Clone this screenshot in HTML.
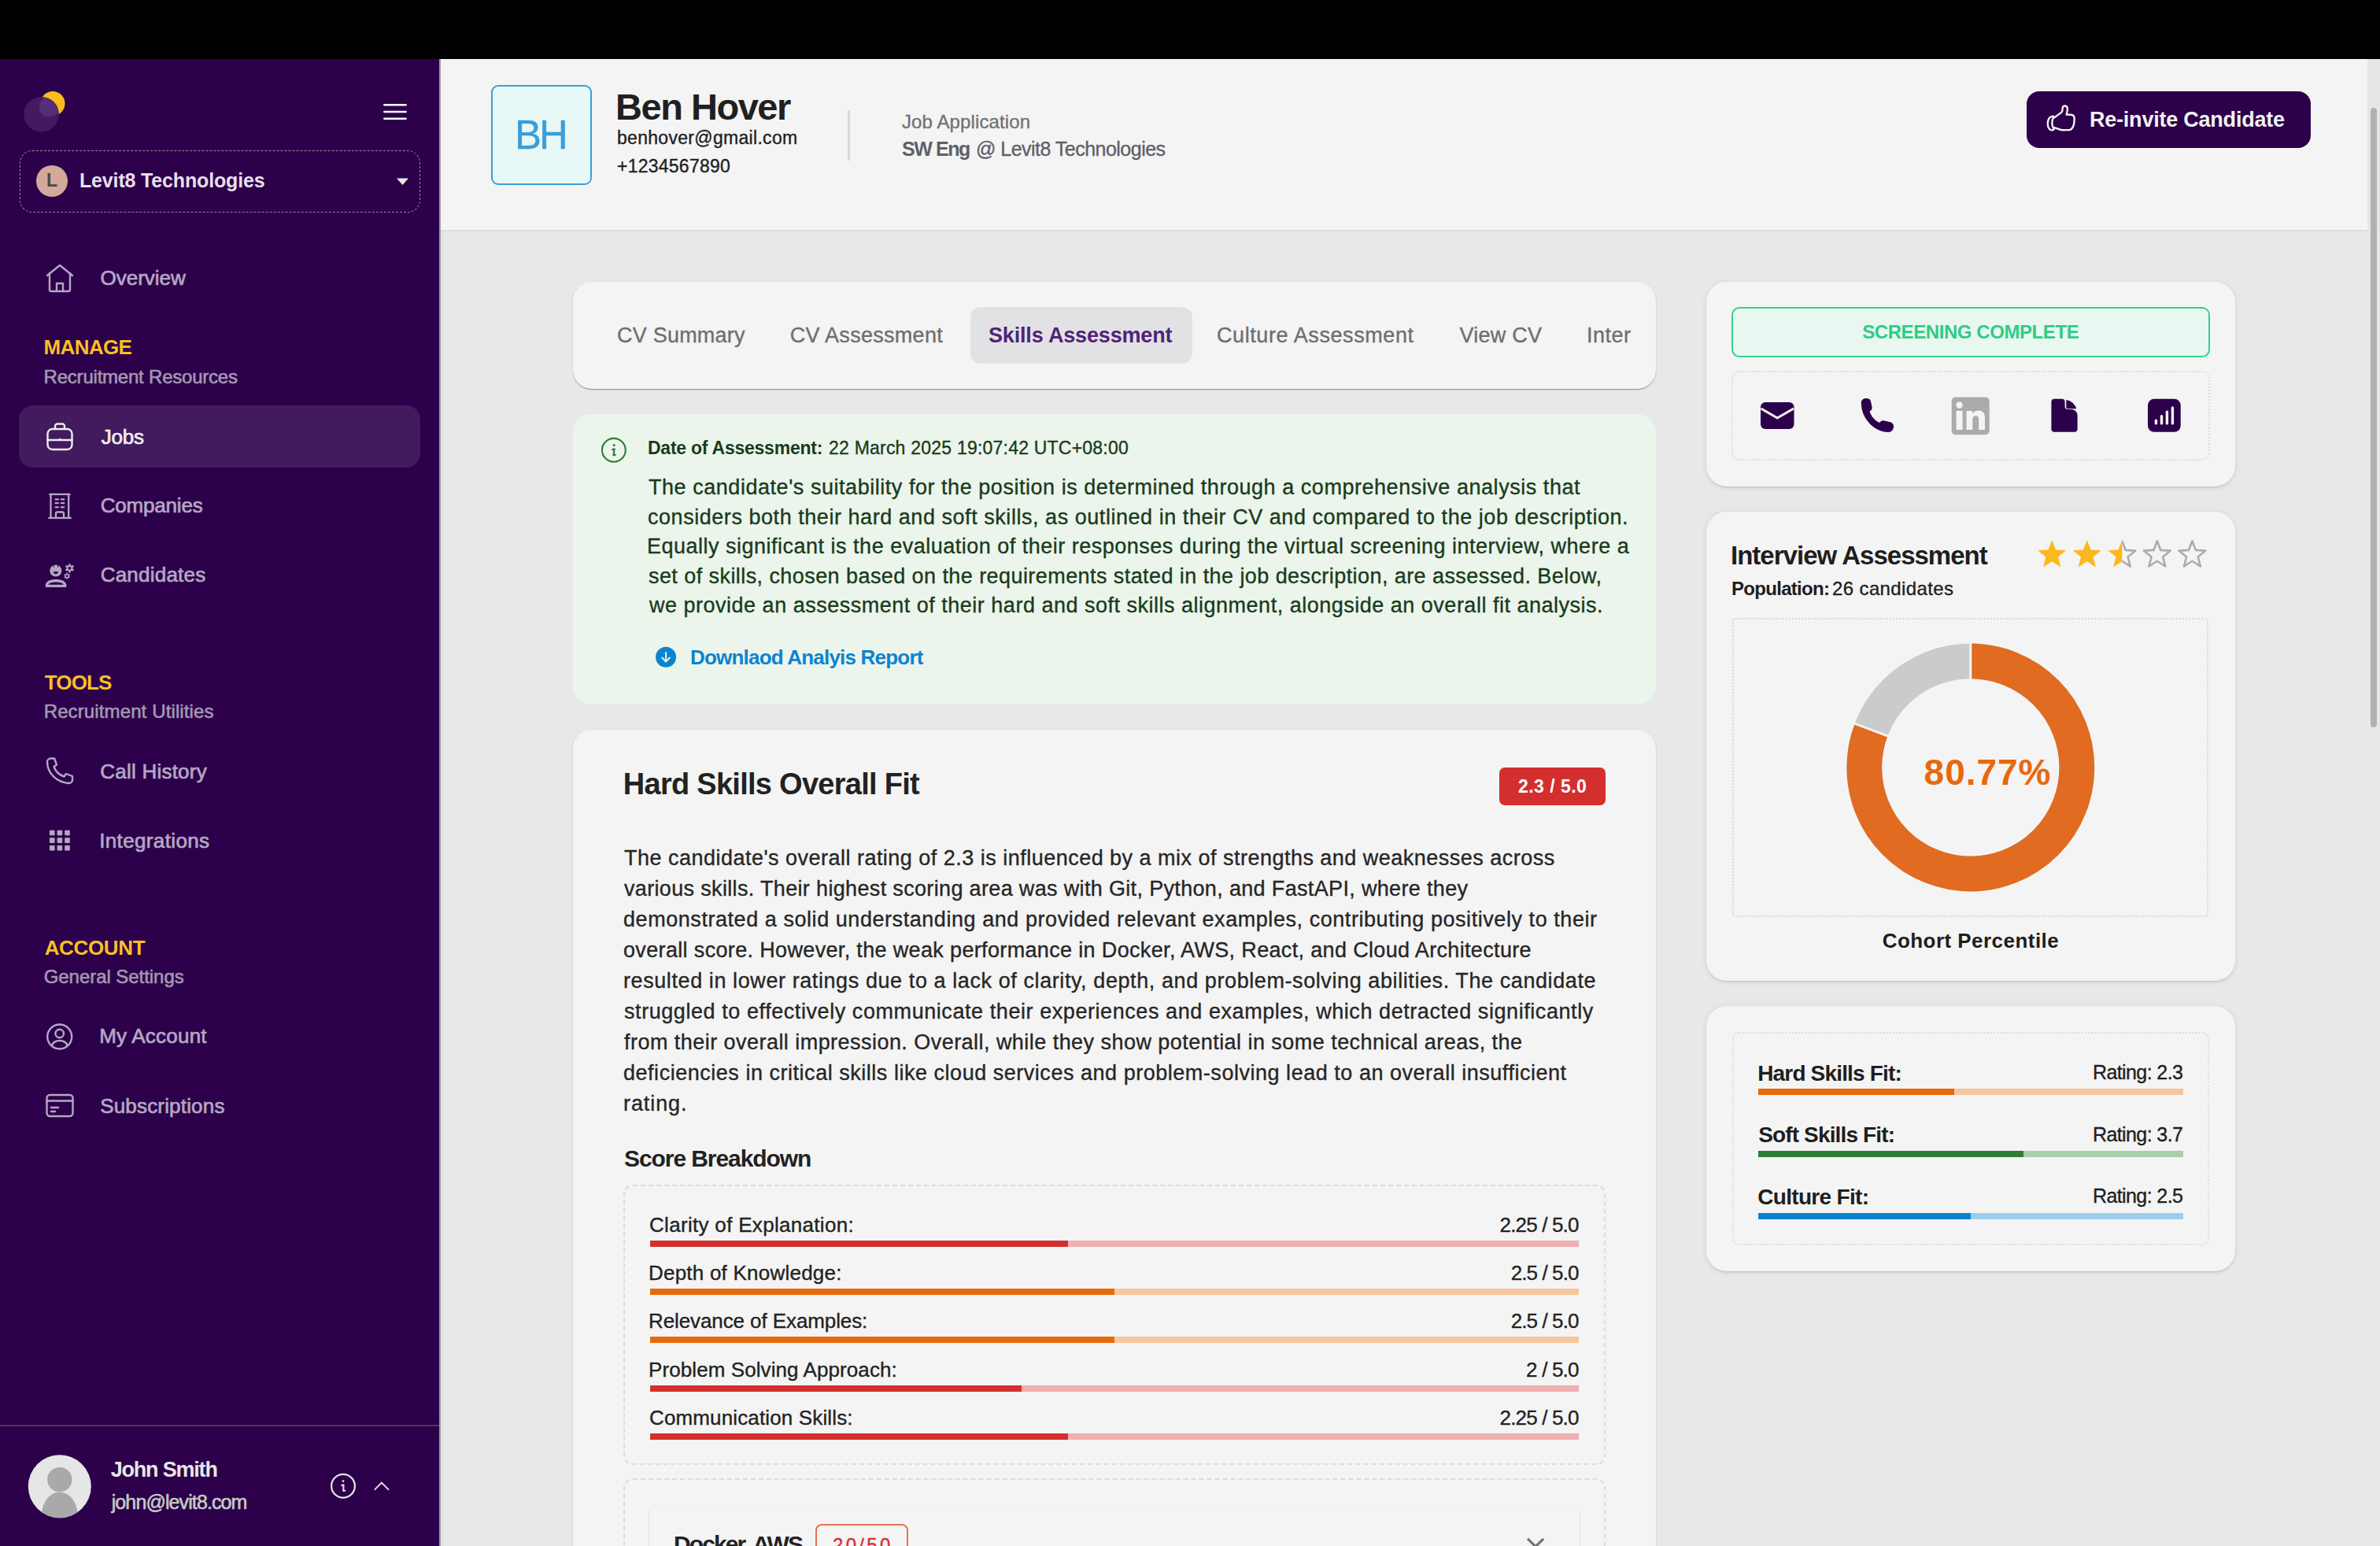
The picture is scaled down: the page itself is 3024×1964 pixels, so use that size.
<!DOCTYPE html>
<html><head><meta charset="utf-8"><style>
*{margin:0;padding:0;box-sizing:border-box}
html,body{width:3024px;height:1964px;overflow:hidden;background:#e8e8e8;font-family:"Liberation Sans",sans-serif}
.a{position:absolute}
.t{position:absolute;white-space:pre}
svg{position:absolute;overflow:visible}
</style></head><body>
<div class="a" style="left:0;top:0;width:3024px;height:75px;background:#000"></div>
<div class="a" style="left:0;top:75px;width:558px;height:1889px;background:#2c004a"></div>
<div class="a" style="left:558px;top:75px;width:2px;height:1889px;background:#9c9c9c"></div>
<svg style="left:0;top:0" width="120" height="200"><defs><clipPath id="bc"><circle cx="52.6" cy="145.3" r="22.3"/></clipPath></defs>
      <circle cx="67" cy="131.5" r="15.5" fill="#fbbc1c"/>
      <circle cx="52.6" cy="145.3" r="22.3" fill="#431a60"/>
      <circle cx="62.5" cy="135.8" r="12.8" fill="#572d79" clip-path="url(#bc)"/></svg>
<svg style="left:480px;top:125px" width="45" height="35"><g stroke="#ffffff" stroke-width="2.6" stroke-linecap="round">
      <line x1="8.4" y1="8.3" x2="35.6" y2="8.3"/><line x1="8.4" y1="17" x2="35.6" y2="17"/><line x1="8.4" y1="25.7" x2="35.6" y2="25.7"/></g></svg>
<div class="a" style="left:24.5px;top:190.8px;width:509px;height:79px;border:1.4px dashed #948aa0;border-radius:16px"></div>
<div class="a" style="left:46px;top:210px;width:40px;height:40px;border-radius:50%;background:#d4a89b"></div>
<svg style="left:500px;top:222px" width="24" height="16"><path d="M4 4.5 L19 4.5 L11.5 13 Z" fill="#e8e8e8"/></svg>
<svg style="left:56px;top:334px" width="40" height="40"><g stroke="#b4a7c4" stroke-width="2.4" fill="none" stroke-linecap="round" stroke-linejoin="round">
      <path d="M4 16 L20 3 L36 16"/><path d="M7 13 V34 a2 2 0 0 0 2 2 H31 a2 2 0 0 0 2 -2 V13"/><path d="M16 36 V26 H24 V36"/></g></svg>
<div class="a" style="left:24px;top:515px;width:509.5px;height:79px;border-radius:18px;background:#421a5e"></div>
<svg style="left:56px;top:535px" width="40" height="40"><g stroke="#ececec" stroke-width="2.4" fill="none" stroke-linecap="round" stroke-linejoin="round">
      <rect x="4.5" y="10" width="31" height="26" rx="6"/><path d="M14 10 V6.5 a3 3 0 0 1 3 -3 H23 a3 3 0 0 1 3 3 V10"/><path d="M4.5 24 H35.5"/></g><circle cx="20" cy="23" r="1.3" fill="#ececec"/></svg>
<svg style="left:50px;top:615px" width="55" height="50"><g stroke="#b4a7c4" stroke-width="2.3" fill="none" stroke-linecap="butt">
      <path d="M12.3 12.9 H39.4"/><path d="M11.3 43 H40.7"/><path d="M14.5 12.9 V43 M37.2 12.9 V43"/><path d="M21 43 V37.5 a2 2 0 0 1 2 -2 H29 a2 2 0 0 1 2 2 V43"/></g>
      <g stroke="#b4a7c4" stroke-width="2.3" stroke-linecap="round"><path d="M20.6 19.4 H23.9 M27.8 19.4 H31.2 M20.6 24.2 H23.9 M27.8 24.2 H31.2 M20.6 29.3 H23.9 M27.8 29.3 H31.2"/></g></svg>
<svg style="left:50px;top:705px" width="55" height="50"><g fill="#b4a7c4">
      <circle cx="20.85" cy="20" r="7.6"/>
      <path d="M7.8 40.9 V38.2 C7.8 33.6 14 31 21 31 C28 31 34.3 33.6 34.3 38.2 V40.9 Z"/>
      <polygon points="37.22,13.07 37.23,11.14 39.77,11.14 39.78,13.07 41.09,13.83 42.77,12.87 44.03,15.07 42.37,16.04 42.37,17.56 44.03,18.53 42.77,20.73 41.09,19.77 39.78,20.53 39.77,22.46 37.23,22.46 37.22,20.53 35.91,19.77 34.23,20.73 32.97,18.53 34.63,17.56 34.63,16.04 32.97,15.07 34.23,12.87 35.91,13.83"/><polygon points="34.20,24.16 34.21,22.80 35.99,22.80 36.00,24.16 36.93,24.70 38.12,24.02 39.01,25.57 37.84,26.26 37.84,27.34 39.01,28.03 38.12,29.58 36.93,28.90 36.00,29.44 35.99,30.80 34.21,30.80 34.20,29.44 33.27,28.90 32.08,29.58 31.19,28.03 32.36,27.34 32.36,26.26 31.19,25.57 32.08,24.02 33.27,24.70"/></g>
      <g fill="#2c004a"><path d="M17.9 21.2 H23.9 A3 3 0 0 1 17.9 21.2 Z"/><rect x="17.6" y="12" width="1" height="3.6"/><rect x="23.1" y="12" width="1" height="3.6"/>
      <path d="M11.2 37.8 C12.5 35.6 16 34.6 21 34.6 C26 34.6 29.5 35.6 30.9 37.8 Z"/>
      <circle cx="38.5" cy="16.8" r="1.9"/><circle cx="35.1" cy="26.8" r="1.4"/></g></svg>
<svg style="left:56px;top:960px" width="40" height="40"><g stroke="#b4a7c4" stroke-width="2.4" fill="none" stroke-linecap="round" stroke-linejoin="round">
      <path d="M8.5 3.5 L13 3.5 L16 11.5 L12.5 14 C14.5 19.5 19.5 24.5 25.5 26.5 L28 23 L36 26 V30.5 a4.5 4.5 0 0 1 -4.5 4.5 C16 34 4 22 4 8 a4.5 4.5 0 0 1 4.5 -4.5 Z"/></g></svg>
<svg style="left:0;top:0" width="100" height="1100"><g fill="#b4a7c4"><rect x="63.0" y="1054.7" width="6.6" height="6.6" rx="0.8"/><rect x="72.6" y="1054.7" width="6.6" height="6.6" rx="0.8"/><rect x="82.2" y="1054.7" width="6.6" height="6.6" rx="0.8"/><rect x="63.0" y="1064.3" width="6.6" height="6.6" rx="0.8"/><rect x="72.6" y="1064.3" width="6.6" height="6.6" rx="0.8"/><rect x="82.2" y="1064.3" width="6.6" height="6.6" rx="0.8"/><rect x="63.0" y="1073.9" width="6.6" height="6.6" rx="0.8"/><rect x="72.6" y="1073.9" width="6.6" height="6.6" rx="0.8"/><rect x="82.2" y="1073.9" width="6.6" height="6.6" rx="0.8"/></g></svg>
<svg style="left:56px;top:1297px" width="40" height="40"><g stroke="#b4a7c4" stroke-width="2.4" fill="none" stroke-linecap="round" stroke-linejoin="round">
      <circle cx="19.7" cy="20" r="15.5"/><circle cx="19.7" cy="16" r="5.3"/><path d="M9.5 31.5 C11.5 27 15 25 19.7 25 C24.4 25 28 27 30 31.5"/></g></svg>
<svg style="left:56px;top:1385px" width="40" height="40"><g stroke="#b4a7c4" stroke-width="2.4" fill="none" stroke-linecap="round" stroke-linejoin="round">
      <rect x="3.5" y="6" width="33" height="27" rx="4"/><path d="M3.5 13.5 H36.5"/><path d="M9 22 H18"/><path d="M9 27 H14"/></g></svg>
<div class="a" style="left:0;top:1810px;width:558px;height:2px;background:#4a3d55"></div>
<svg style="left:35px;top:1848px" width="82" height="82"><defs><clipPath id="av"><circle cx="40.8" cy="40.3" r="40"/></clipPath></defs>
      <circle cx="40.8" cy="40.3" r="40" fill="#e6e6e6"/><g clip-path="url(#av)" fill="#a9a9a9"><circle cx="40.8" cy="31.6" r="15.7"/><ellipse cx="40.8" cy="78.5" rx="23.2" ry="31"/></g></svg>
<svg style="left:415px;top:1867px" width="42" height="42"><circle cx="21" cy="20.8" r="14.9" stroke="#e4e4e4" stroke-width="2.2" fill="none"/>
      <circle cx="21" cy="14.6" r="1.4" fill="#e4e4e4"/><path d="M19.2 20.2 Q20.4 19.2 21.6 19.4 L21.2 26.8 Q22.3 27.2 23.2 26.6" stroke="#e4e4e4" stroke-width="2" fill="none" stroke-linecap="round" stroke-linejoin="round"/></svg>
<svg style="left:470px;top:1875px" width="30" height="24"><path d="M6.3 17.2 L14.9 8.6 L23.4 17.2" stroke="#e4e4e4" stroke-width="1.9" fill="none" stroke-linecap="round" stroke-linejoin="miter"/></svg>
<div class="a" style="left:560px;top:75px;width:2448px;height:217px;background:#f4f4f4;border-top:1px solid #ffffff"></div>
<div class="a" style="left:560px;top:292px;width:2448px;height:2px;background:#dcdcdc"></div>
<div class="a" style="left:3008px;top:75px;width:16px;height:219px;background:#e6e6e6"></div>
<div class="a" style="left:3012px;top:137px;width:8px;height:787px;border-radius:4px;background:#b1b1b1"></div>
<div class="a" style="left:624px;top:108px;width:128px;height:127px;border:2.5px solid #3c9fd9;border-radius:9px;background:#e8f8f6"></div>
<div class="a" style="left:1077px;top:140px;width:3px;height:64px;background:#dadada"></div>
<div class="a" style="left:2575px;top:116px;width:361px;height:72px;border-radius:16px;background:#2c004a"></div>
<svg style="left:2598px;top:130px" width="44" height="42"><g stroke="#f2f2f2" stroke-width="2.4" fill="none" stroke-linejoin="round" stroke-linecap="round">
      <path d="M10.8 17.6 C6 17.8 3.8 22 3.8 27 C3.8 32 6 35.4 9.5 35.4 C10.6 35.4 11.5 35 11.8 34.2 C10.2 31.5 9.3 29 9.3 26.8 C9.3 24 10 20.5 11.4 18.3 Z"/>
      <path d="M12.2 19.4 L21.4 12.6 C22.4 11.6 22.7 10 22.6 8 C22.5 5.6 24 4.4 25.8 4.5 C28 4.7 29 6.6 28.9 9 C28.8 11 28.2 13.5 27.6 15.6 L33.4 15.8 C36 16 37.7 18 37.7 21 C37.7 24.5 37.3 27.5 36.4 30 C35.4 32.5 33.8 34.8 31.2 35.1 L23 35.3 C19 35.3 15.5 33 12.2 32.2"/></g></svg>
<div class="a" style="left:560px;top:294px;width:5px;height:1670px;background:linear-gradient(to right,#e3e3e3,#dfe0e1 60%,#e8e8e8)"></div>
<div class="a" style="left:728px;top:358px;width:1376px;height:136px;border-radius:24px;background:#f4f4f4;box-shadow:0 2px 1px -1px rgba(0,0,0,0.2),0 1px 1px 0 rgba(0,0,0,0.14),0 1px 3px 0 rgba(0,0,0,0.12)"></div>
<div class="a" style="left:1233px;top:390px;width:282px;height:72px;border-radius:13px;background:#e2e2e4"></div>
<div class="a" style="left:728px;top:526px;width:1376px;height:369px;border-radius:24px;background:#ecf5ec"></div>
<svg style="left:760px;top:552px" width="40" height="40"><circle cx="19.9" cy="19.8" r="14.9" stroke="#2e7d32" stroke-width="2.1" fill="none"/>
      <circle cx="20.1" cy="13.5" r="1.5" fill="#2e7d32"/><path d="M18.2 19.3 Q19.4 18.2 20.7 18.4 L19.5 26.2 Q20.6 26.6 21.8 25.6" stroke="#2e7d32" stroke-width="2.1" fill="none" stroke-linecap="round" stroke-linejoin="round"/></svg>
<svg style="left:830px;top:819px" width="32" height="32"><circle cx="16.1" cy="15.8" r="13" fill="#0a84d0"/>
      <path d="M16.1 10 V21.6 M11.3 16.5 L16.1 21.6 L20.9 16.5" stroke="#ecf5ec" stroke-width="2" fill="none" stroke-linecap="round" stroke-linejoin="round"/></svg>
<div class="a" style="left:728px;top:927px;width:1376px;height:1100px;border-radius:24px;background:#f4f4f4;box-shadow:0 2px 1px -1px rgba(0,0,0,0.2),0 1px 1px 0 rgba(0,0,0,0.14),0 1px 3px 0 rgba(0,0,0,0.12)"></div>
<div class="a" style="left:1905px;top:975px;width:135px;height:48px;border-radius:7px;background:#d32f2f"></div>
<div class="a" style="left:792px;top:1505px;width:1248px;height:356px;border:2px dashed #dcdcdc;border-radius:12px"></div>
<div class="a" style="left:826px;top:1576.0px;width:1180px;height:8px;background:#eeb0b0"></div>
<div class="a" style="left:826px;top:1576.0px;width:531.0px;height:8px;background:#d32f2f"></div>
<div class="a" style="left:826px;top:1637.2px;width:1180px;height:8px;background:#f6c79e"></div>
<div class="a" style="left:826px;top:1637.2px;width:590.0px;height:8px;background:#e8690b"></div>
<div class="a" style="left:826px;top:1698.4px;width:1180px;height:8px;background:#f6c79e"></div>
<div class="a" style="left:826px;top:1698.4px;width:590.0px;height:8px;background:#e8690b"></div>
<div class="a" style="left:826px;top:1759.6px;width:1180px;height:8px;background:#eeb0b0"></div>
<div class="a" style="left:826px;top:1759.6px;width:472.0px;height:8px;background:#d32f2f"></div>
<div class="a" style="left:826px;top:1820.8px;width:1180px;height:8px;background:#eeb0b0"></div>
<div class="a" style="left:826px;top:1820.8px;width:531.0px;height:8px;background:#d32f2f"></div>
<div class="a" style="left:792px;top:1878px;width:1248px;height:200px;border:2px dashed #dcdcdc;border-radius:12px"></div>
<div class="a" style="left:825px;top:1911.5px;width:1182px;height:150px;border-radius:10px;background:#f4f4f4;box-shadow:0 2px 1px -1px rgba(0,0,0,0.2),0 1px 1px 0 rgba(0,0,0,0.14),0 1px 3px 0 rgba(0,0,0,0.12)"></div>
<div class="a" style="left:1036px;top:1936px;width:118px;height:60px;border:2px solid #e57357;border-radius:8px"></div>
<svg style="left:1935px;top:1950px" width="32" height="20"><path d="M6 4.8 L16.1 14.6 L26.2 4.8" stroke="#727272" stroke-width="3.2" fill="none"/></svg>
<div class="a" style="left:2168px;top:358px;width:672px;height:260px;border-radius:26px;background:#f4f4f4;box-shadow:0 2px 2px -1px rgba(0,0,0,0.14),0 1px 6px 1px rgba(0,0,0,0.08)"></div>
<div class="a" style="left:2200px;top:390px;width:608px;height:64px;border:2.5px solid #34d08a;border-radius:10px;background:#e8f8f1"></div>
<div class="a" style="left:2200px;top:471px;width:608px;height:114px;border:2px dotted #dddddd;border-radius:10px"></div>
<svg style="left:2230px;top:500px" width="60" height="52"><rect x="7" y="11" width="42.5" height="34" rx="6" fill="#2c004a"/>
      <path d="M7.5 19 L28.2 31 L49 19" stroke="#f4f4f4" stroke-width="3" fill="none" stroke-linejoin="round"/></svg>
<svg style="left:2360px;top:503px" width="50" height="50"><path d="M4.8 9 C4.8 5 7.5 3 11 3 C14.5 3 16.5 4.5 17 7 L18.5 14 C19 16.5 18 18 15.5 19.5 C17.5 26 22 31 28 34 C30 32 31.5 31 34 31.5 L41 33 C44.5 34 46.5 36 46 39.5 C45.5 43.5 43 46 39 46 C22 46 4.8 29 4.8 9 Z" fill="#2c004a"/></svg>
<svg style="left:2479px;top:504px" width="50" height="50"><rect x="0.7" y="0.5" width="48" height="47.7" rx="5" fill="#ababab"/>
      <circle cx="10.6" cy="10.5" r="4.2" fill="#f4f4f4"/><rect x="6.6" y="18" width="8" height="24" fill="#f4f4f4"/>
      <path d="M19.5 18 H27 V21.5 C28.5 19.2 31 17.5 35 17.5 C40.5 17.5 43 21 43 27 V42 H35.2 V29 C35.2 26 34 24.2 31.3 24.2 C28.8 24.2 27.3 26 27.3 29 V42 H19.5 Z" fill="#f4f4f4"/></svg>
<svg style="left:2600px;top:503px" width="46" height="50"><path d="M10.4 3.8 H19.8 a3.8 3.8 0 0 1 3.8 3.8 V13.2 a3.8 3.8 0 0 0 3.8 3.8 H31.6 a8 8 0 0 1 8 8 V41.8 a4 4 0 0 1 -4 4 H10.4 a4 4 0 0 1 -4 -4 V7.8 a4 4 0 0 1 4 -4 Z" fill="#2c004a"/>
      <path d="M25.3 5 V14.6 a1.6 1.6 0 0 0 1.6 1.6 H38.3 C36.5 10.5 31.5 6 25.3 5 Z" fill="#2c004a"/></svg>
<svg style="left:2726px;top:503px" width="50" height="50"><rect x="3" y="3.8" width="41.7" height="42" rx="8" fill="#2c004a"/>
      <g stroke="#f4f4f4" stroke-width="3.4" stroke-linecap="round"><path d="M13.4 31.1 V34.9 M20.5 25.7 V34.9 M27.4 20.2 V34.9 M34.4 14.9 V34.9"/></g></svg>
<div class="a" style="left:2168px;top:650px;width:672px;height:596px;border-radius:26px;background:#f4f4f4;box-shadow:0 2px 2px -1px rgba(0,0,0,0.14),0 1px 6px 1px rgba(0,0,0,0.08)"></div>
<svg style="left:0;top:0" width="2900" height="760"><defs><clipPath id="half"><rect x="2580" y="600" width="115" height="200"/></clipPath></defs><polygon points="2607.20,686.10 2612.00,698.49 2625.27,699.23 2614.97,707.62 2618.37,720.47 2607.20,713.27 2596.03,720.47 2599.43,707.62 2589.13,699.23 2602.40,698.49" fill="#fbb81f"/><polygon points="2651.75,686.10 2656.55,698.49 2669.82,699.23 2659.52,707.62 2662.92,720.47 2651.75,713.27 2640.58,720.47 2643.98,707.62 2633.68,699.23 2646.95,698.49" fill="#fbb81f"/><clipPath id="h3r"><rect x="2696.2999999999997" y="680" width="25" height="50"/></clipPath><polygon points="2696.30,687.30 2700.80,698.91 2713.23,699.60 2703.58,707.47 2706.76,719.50 2696.30,712.75 2685.84,719.50 2689.02,707.47 2679.37,699.60 2691.80,698.91" fill="none" stroke="#ababab" stroke-width="2.6" stroke-linejoin="round" clip-path="url(#h3r)"/><clipPath id="h3"><rect x="2671.2999999999997" y="680" width="25" height="50"/></clipPath><polygon points="2696.30,686.10 2701.10,698.49 2714.37,699.23 2704.07,707.62 2707.47,720.47 2696.30,713.27 2685.13,720.47 2688.53,707.62 2678.23,699.23 2691.50,698.49" fill="#fbb81f" clip-path="url(#h3)"/><polygon points="2740.85,687.30 2745.35,698.91 2757.78,699.60 2748.13,707.47 2751.31,719.50 2740.85,712.75 2730.39,719.50 2733.57,707.47 2723.92,699.60 2736.35,698.91" fill="none" stroke="#ababab" stroke-width="2.6" stroke-linejoin="round"/><polygon points="2785.40,687.30 2789.90,698.91 2802.33,699.60 2792.68,707.47 2795.86,719.50 2785.40,712.75 2774.94,719.50 2778.12,707.47 2768.47,699.60 2780.90,698.91" fill="none" stroke="#ababab" stroke-width="2.6" stroke-linejoin="round"/></svg>
<div class="a" style="left:2201px;top:785px;width:605px;height:380px;border:2.5px dotted #d8d8d8;border-radius:4px"></div>
<svg style="left:0;top:0" width="2700" height="1200"><g transform="rotate(-90 2503.8 975)">
      <circle cx="2503.8" cy="975" r="135.05" fill="none" stroke="#cbcbcb" stroke-width="44.7"/>
      <circle cx="2503.8" cy="975" r="135.05" fill="none" stroke="#e06b21" stroke-width="44.7" stroke-dasharray="685.37 848.54"/></g>
      <line x1="2503.8" y1="816.6" x2="2503.8" y2="863.3000000000001" stroke="#f4f4f4" stroke-width="3"/>
      <line x1="2399.36" y1="935.39" x2="2355.70" y2="918.82" stroke="#f4f4f4" stroke-width="3"/></svg>
<div class="a" style="left:2168px;top:1278px;width:672px;height:337px;border-radius:26px;background:#f4f4f4;box-shadow:0 2px 2px -1px rgba(0,0,0,0.14),0 1px 6px 1px rgba(0,0,0,0.08)"></div>
<div class="a" style="left:2201px;top:1311px;width:606px;height:271px;border:2px dotted #dddddd;border-radius:8px"></div>
<div class="a" style="left:2234.2px;top:1383.4px;width:539.5px;height:8px;background:#f7c59e"></div>
<div class="a" style="left:2234.2px;top:1383.4px;width:248.5px;height:8px;background:#e8690b"></div>
<div class="a" style="left:2234.2px;top:1462.0px;width:539.5px;height:8px;background:#a9cfab"></div>
<div class="a" style="left:2234.2px;top:1462.0px;width:336.8px;height:8px;background:#2e7d32"></div>
<div class="a" style="left:2234.2px;top:1540.7px;width:539.5px;height:8px;background:#9ccdec"></div>
<div class="a" style="left:2234.2px;top:1540.7px;width:269.8px;height:8px;background:#0a84d0"></div>
<div class="t" style="left:58.9px;top:214.0px;font-size:23px;line-height:30px;font-weight:700;color:#4a4a4a;letter-spacing:0.000px;">L</div>
<div class="t" style="left:101.0px;top:212.9px;font-size:25px;line-height:32px;font-weight:700;color:#e8dfec;letter-spacing:-0.160px;">Levit8 Technologies</div>
<div class="t" style="left:127.6px;top:336.3px;font-size:26px;line-height:34px;font-weight:400;color:#b4a7c4;letter-spacing:-0.025px;-webkit-text-stroke:0.7px #b4a7c4;">Overview</div>
<div class="t" style="left:55.6px;top:424.0px;font-size:26px;line-height:34px;font-weight:700;color:#fbbf24;letter-spacing:-0.642px;">MANAGE</div>
<div class="t" style="left:55.6px;top:462.7px;font-size:24px;line-height:31px;font-weight:400;color:#a497b3;letter-spacing:-0.218px;-webkit-text-stroke:0.6px #a497b3;">Recruitment Resources</div>
<div class="t" style="left:128.7px;top:537.5px;font-size:26px;line-height:34px;font-weight:400;color:#eeeeee;letter-spacing:-0.207px;-webkit-text-stroke:0.7px #eeeeee;">Jobs</div>
<div class="t" style="left:127.7px;top:624.8px;font-size:26px;line-height:34px;font-weight:400;color:#b4a7c4;letter-spacing:-0.189px;-webkit-text-stroke:0.7px #b4a7c4;">Companies</div>
<div class="t" style="left:127.7px;top:713.0px;font-size:26px;line-height:34px;font-weight:400;color:#b4a7c4;letter-spacing:0.218px;-webkit-text-stroke:0.7px #b4a7c4;">Candidates</div>
<div class="t" style="left:56.7px;top:849.7px;font-size:26px;line-height:34px;font-weight:700;color:#fbbf24;letter-spacing:-0.835px;">TOOLS</div>
<div class="t" style="left:55.7px;top:887.6px;font-size:24px;line-height:31px;font-weight:400;color:#a497b3;letter-spacing:0.121px;-webkit-text-stroke:0.6px #a497b3;">Recruitment Utilities</div>
<div class="t" style="left:127.2px;top:963.0px;font-size:26px;line-height:34px;font-weight:400;color:#b4a7c4;letter-spacing:0.236px;-webkit-text-stroke:0.7px #b4a7c4;">Call History</div>
<div class="t" style="left:126.2px;top:1050.6px;font-size:26px;line-height:34px;font-weight:400;color:#b4a7c4;letter-spacing:0.367px;-webkit-text-stroke:0.7px #b4a7c4;">Integrations</div>
<div class="t" style="left:56.7px;top:1186.8px;font-size:26px;line-height:34px;font-weight:700;color:#fbbf24;letter-spacing:-0.351px;">ACCOUNT</div>
<div class="t" style="left:55.7px;top:1225.2px;font-size:24px;line-height:31px;font-weight:400;color:#a497b3;letter-spacing:-0.051px;-webkit-text-stroke:0.6px #a497b3;">General Settings</div>
<div class="t" style="left:126.2px;top:1299.4px;font-size:26px;line-height:34px;font-weight:400;color:#b4a7c4;letter-spacing:0.222px;-webkit-text-stroke:0.7px #b4a7c4;">My Account</div>
<div class="t" style="left:127.2px;top:1387.7px;font-size:26px;line-height:34px;font-weight:400;color:#b4a7c4;letter-spacing:0.177px;-webkit-text-stroke:0.7px #b4a7c4;">Subscriptions</div>
<div class="t" style="left:140.7px;top:1850.4px;font-size:27px;line-height:35px;font-weight:700;color:#e6e6e6;letter-spacing:-1.200px;">John Smith</div>
<div class="t" style="left:141.7px;top:1892.3px;font-size:25px;line-height:32px;font-weight:400;color:#c5cac5;letter-spacing:-0.890px;-webkit-text-stroke:0.6px #c5cac5;">john@levit8.com</div>
<div class="t" style="left:654.0px;top:138.8px;font-size:51px;line-height:66px;font-weight:400;color:#3a9ed8;letter-spacing:-3.017px;-webkit-text-stroke:0.35px #3a9ed8;">BH</div>
<div class="t" style="left:782.0px;top:104.9px;font-size:47px;line-height:61px;font-weight:700;color:#202020;letter-spacing:-1.472px;">Ben Hover</div>
<div class="t" style="left:784.0px;top:159.8px;font-size:23px;line-height:30px;font-weight:400;color:#1e1e1e;letter-spacing:0.300px;-webkit-text-stroke:0.35px #1e1e1e;">benhover@gmail.com</div>
<div class="t" style="left:784.0px;top:196.4px;font-size:23px;line-height:30px;font-weight:400;color:#1e1e1e;letter-spacing:0.244px;-webkit-text-stroke:0.35px #1e1e1e;">+1234567890</div>
<div class="t" style="left:1146.0px;top:138.6px;font-size:24px;line-height:31px;font-weight:400;color:#727272;letter-spacing:0.112px;-webkit-text-stroke:0.35px #727272;">Job Application</div>
<div class="t" style="left:1146.0px;top:173.3px;font-size:25px;line-height:32px;font-weight:700;color:#5f5f68;letter-spacing:-1.433px;">SW Eng</div>
<div class="t" style="left:1240.0px;top:173.3px;font-size:25px;line-height:32px;font-weight:400;color:#5f5f68;letter-spacing:-0.521px;-webkit-text-stroke:0.35px #5f5f68;">@ Levit8 Technologies</div>
<div class="t" style="left:2655.0px;top:134.5px;font-size:27px;line-height:35px;font-weight:700;color:#f2f2f2;letter-spacing:-0.224px;">Re-invite Candidate</div>
<div class="t" style="left:784.0px;top:409.0px;font-size:27px;line-height:35px;font-weight:400;color:#6e6e6e;letter-spacing:0.220px;-webkit-text-stroke:0.35px #6e6e6e;">CV Summary</div>
<div class="t" style="left:1003.7px;top:409.0px;font-size:27px;line-height:35px;font-weight:400;color:#6e6e6e;letter-spacing:0.287px;-webkit-text-stroke:0.35px #6e6e6e;">CV Assessment</div>
<div class="t" style="left:1256.0px;top:409.0px;font-size:27px;line-height:35px;font-weight:700;color:#50227a;letter-spacing:-0.165px;">Skills Assessment</div>
<div class="t" style="left:1546.0px;top:409.0px;font-size:27px;line-height:35px;font-weight:400;color:#6e6e6e;letter-spacing:0.583px;-webkit-text-stroke:0.35px #6e6e6e;">Culture Assessment</div>
<div class="t" style="left:1854.5px;top:409.0px;font-size:27px;line-height:35px;font-weight:400;color:#6e6e6e;letter-spacing:0.244px;-webkit-text-stroke:0.35px #6e6e6e;">View CV</div>
<div class="t" style="left:2016.0px;top:409.0px;font-size:27px;line-height:35px;font-weight:400;color:#6e6e6e;letter-spacing:0.491px;-webkit-text-stroke:0.35px #6e6e6e;">Inter</div>
<div class="t" style="left:823.0px;top:553.6px;font-size:23px;line-height:30px;font-weight:700;color:#183b1b;letter-spacing:-0.242px;">Date of Assessment:</div>
<div class="t" style="left:1053.0px;top:553.6px;font-size:23px;line-height:30px;font-weight:400;color:#183b1b;letter-spacing:0.219px;-webkit-text-stroke:0.35px #183b1b;">22 March 2025 19:07:42 UTC+08:00</div>
<div class="t" style="left:824.0px;top:602.1px;font-size:27px;line-height:35px;font-weight:400;color:#183b1b;letter-spacing:0.539px;-webkit-text-stroke:0.35px #183b1b;">The candidate's suitability for the position is determined through a comprehensive analysis that</div>
<div class="t" style="left:823.0px;top:639.6px;font-size:27px;line-height:35px;font-weight:400;color:#183b1b;letter-spacing:0.543px;-webkit-text-stroke:0.35px #183b1b;">considers both their hard and soft skills, as outlined in their CV and compared to the job description.</div>
<div class="t" style="left:822.0px;top:677.1px;font-size:27px;line-height:35px;font-weight:400;color:#183b1b;letter-spacing:0.500px;-webkit-text-stroke:0.35px #183b1b;">Equally significant is the evaluation of their responses during the virtual screening interview, where a</div>
<div class="t" style="left:824.0px;top:714.6px;font-size:27px;line-height:35px;font-weight:400;color:#183b1b;letter-spacing:0.427px;-webkit-text-stroke:0.35px #183b1b;">set of skills, chosen based on the requirements stated in the job description, are assessed. Below,</div>
<div class="t" style="left:825.0px;top:752.1px;font-size:27px;line-height:35px;font-weight:400;color:#183b1b;letter-spacing:0.504px;-webkit-text-stroke:0.35px #183b1b;">we provide an assessment of their hard and soft skills alignment, alongside an overall fit analysis.</div>
<div class="t" style="left:877.0px;top:817.5px;font-size:26px;line-height:34px;font-weight:700;color:#0a84d0;letter-spacing:-0.798px;">Downlaod Analyis Report</div>
<div class="t" style="left:791.8px;top:972.3px;font-size:38px;line-height:49px;font-weight:700;color:#222222;letter-spacing:-0.726px;">Hard Skills Overall Fit</div>
<div class="t" style="left:1929.0px;top:984.0px;font-size:23px;line-height:30px;font-weight:700;color:#ffffff;letter-spacing:0.459px;">2.3 / 5.0</div>
<div class="t" style="left:793.0px;top:1073.1px;font-size:27px;line-height:35px;font-weight:400;color:#262626;letter-spacing:0.483px;-webkit-text-stroke:0.35px #262626;">The candidate's overall rating of 2.3 is influenced by a mix of strengths and weaknesses across</div>
<div class="t" style="left:793.0px;top:1112.1px;font-size:27px;line-height:35px;font-weight:400;color:#262626;letter-spacing:0.340px;-webkit-text-stroke:0.35px #262626;">various skills. Their highest scoring area was with Git, Python, and FastAPI, where they</div>
<div class="t" style="left:792.0px;top:1151.1px;font-size:27px;line-height:35px;font-weight:400;color:#262626;letter-spacing:0.554px;-webkit-text-stroke:0.35px #262626;">demonstrated a solid understanding and provided relevant examples, contributing positively to their</div>
<div class="t" style="left:792.0px;top:1190.1px;font-size:27px;line-height:35px;font-weight:400;color:#262626;letter-spacing:0.344px;-webkit-text-stroke:0.35px #262626;">overall score. However, the weak performance in Docker, AWS, React, and Cloud Architecture</div>
<div class="t" style="left:792.0px;top:1229.1px;font-size:27px;line-height:35px;font-weight:400;color:#262626;letter-spacing:0.587px;-webkit-text-stroke:0.35px #262626;">resulted in lower ratings due to a lack of clarity, depth, and problem-solving abilities. The candidate</div>
<div class="t" style="left:793.0px;top:1268.1px;font-size:27px;line-height:35px;font-weight:400;color:#262626;letter-spacing:0.568px;-webkit-text-stroke:0.35px #262626;">struggled to effectively communicate their experiences and examples, which detracted significantly</div>
<div class="t" style="left:793.0px;top:1307.1px;font-size:27px;line-height:35px;font-weight:400;color:#262626;letter-spacing:0.457px;-webkit-text-stroke:0.35px #262626;">from their overall impression. Overall, while they show potential in some technical areas, the</div>
<div class="t" style="left:792.0px;top:1346.1px;font-size:27px;line-height:35px;font-weight:400;color:#262626;letter-spacing:0.525px;-webkit-text-stroke:0.35px #262626;">deficiencies in critical skills like cloud services and problem-solving lead to an overall insufficient</div>
<div class="t" style="left:792.0px;top:1385.1px;font-size:27px;line-height:35px;font-weight:400;color:#262626;letter-spacing:0.910px;-webkit-text-stroke:0.35px #262626;">rating.</div>
<div class="t" style="left:793.0px;top:1452.1px;font-size:30px;line-height:39px;font-weight:700;color:#222222;letter-spacing:-1.078px;">Score Breakdown</div>
<div class="t" style="left:825.0px;top:1539.0px;font-size:26px;line-height:34px;font-weight:400;color:#222222;letter-spacing:0.309px;-webkit-text-stroke:0.35px #222222;">Clarity of Explanation:</div>
<div class="t" style="left:1905.6px;top:1539.0px;font-size:26px;line-height:34px;font-weight:400;color:#222222;letter-spacing:-0.838px;-webkit-text-stroke:0.35px #222222;">2.25 / 5.0</div>
<div class="t" style="left:824.0px;top:1600.2px;font-size:26px;line-height:34px;font-weight:400;color:#222222;letter-spacing:0.223px;-webkit-text-stroke:0.35px #222222;">Depth of Knowledge:</div>
<div class="t" style="left:1919.7px;top:1600.2px;font-size:26px;line-height:34px;font-weight:400;color:#222222;letter-spacing:-0.900px;-webkit-text-stroke:0.35px #222222;">2.5 / 5.0</div>
<div class="t" style="left:824.0px;top:1661.4px;font-size:26px;line-height:34px;font-weight:400;color:#222222;letter-spacing:-0.096px;-webkit-text-stroke:0.35px #222222;">Relevance of Examples:</div>
<div class="t" style="left:1919.7px;top:1661.4px;font-size:26px;line-height:34px;font-weight:400;color:#222222;letter-spacing:-0.900px;-webkit-text-stroke:0.35px #222222;">2.5 / 5.0</div>
<div class="t" style="left:824.0px;top:1722.6px;font-size:26px;line-height:34px;font-weight:400;color:#222222;letter-spacing:0.088px;-webkit-text-stroke:0.35px #222222;">Problem Solving Approach:</div>
<div class="t" style="left:1939.1px;top:1722.6px;font-size:26px;line-height:34px;font-weight:400;color:#222222;letter-spacing:-0.822px;-webkit-text-stroke:0.35px #222222;">2 / 5.0</div>
<div class="t" style="left:825.0px;top:1783.8px;font-size:26px;line-height:34px;font-weight:400;color:#222222;letter-spacing:0.139px;-webkit-text-stroke:0.35px #222222;">Communication Skills:</div>
<div class="t" style="left:1905.6px;top:1783.8px;font-size:26px;line-height:34px;font-weight:400;color:#222222;letter-spacing:-0.838px;-webkit-text-stroke:0.35px #222222;">2.25 / 5.0</div>
<div class="t" style="left:856.0px;top:1942.1px;font-size:30px;line-height:39px;font-weight:700;color:#222222;letter-spacing:-1.906px;">Docker, AWS</div>
<div class="t" style="left:1058.0px;top:1947.2px;font-size:24px;line-height:31px;font-weight:400;color:#d32f2f;letter-spacing:-1.673px;-webkit-text-stroke:0.4px #d32f2f">2.0 / 5.0</div>
<div class="t" style="left:2366.2px;top:406.2px;font-size:24px;line-height:31px;font-weight:700;color:#2fcc85;letter-spacing:-0.423px;">SCREENING COMPLETE</div>
<div class="t" style="left:2199.0px;top:684.1px;font-size:33px;line-height:43px;font-weight:700;color:#1e1e1e;letter-spacing:-0.983px;">Interview Assessment</div>
<div class="t" style="left:2200.0px;top:732.2px;font-size:24px;line-height:31px;font-weight:700;color:#1e1e1e;letter-spacing:-0.698px;">Population:</div>
<div class="t" style="left:2328.0px;top:732.2px;font-size:24px;line-height:31px;font-weight:400;color:#1e1e1e;letter-spacing:0.379px;-webkit-text-stroke:0.35px #1e1e1e;">26 candidates</div>
<div class="t" style="left:2444.6px;top:951.1px;font-size:46px;line-height:60px;font-weight:700;color:#e8680f;letter-spacing:0.978px;">80.77%</div>
<div class="t" style="left:2391.7px;top:1177.6px;font-size:26px;line-height:34px;font-weight:700;color:#1e1e1e;letter-spacing:0.459px;">Cohort Percentile</div>
<div class="t" style="left:2233.2px;top:1345.7px;font-size:28px;line-height:36px;font-weight:700;color:#1e1e1e;letter-spacing:-0.828px;">Hard Skills Fit:</div>
<div class="t" style="left:2659.0px;top:1345.7px;font-size:25px;line-height:32px;font-weight:400;color:#1e1e1e;letter-spacing:-0.601px;-webkit-text-stroke:0.35px #1e1e1e;">Rating: 2.3</div>
<div class="t" style="left:2234.2px;top:1424.3px;font-size:28px;line-height:36px;font-weight:700;color:#1e1e1e;letter-spacing:-0.857px;">Soft Skills Fit:</div>
<div class="t" style="left:2659.0px;top:1425.3px;font-size:25px;line-height:32px;font-weight:400;color:#1e1e1e;letter-spacing:-0.601px;-webkit-text-stroke:0.35px #1e1e1e;">Rating: 3.7</div>
<div class="t" style="left:2233.2px;top:1503.0px;font-size:28px;line-height:36px;font-weight:700;color:#1e1e1e;letter-spacing:-0.681px;">Culture Fit:</div>
<div class="t" style="left:2659.0px;top:1503.3px;font-size:25px;line-height:32px;font-weight:400;color:#1e1e1e;letter-spacing:-0.601px;-webkit-text-stroke:0.35px #1e1e1e;">Rating: 2.5</div>
</body></html>
